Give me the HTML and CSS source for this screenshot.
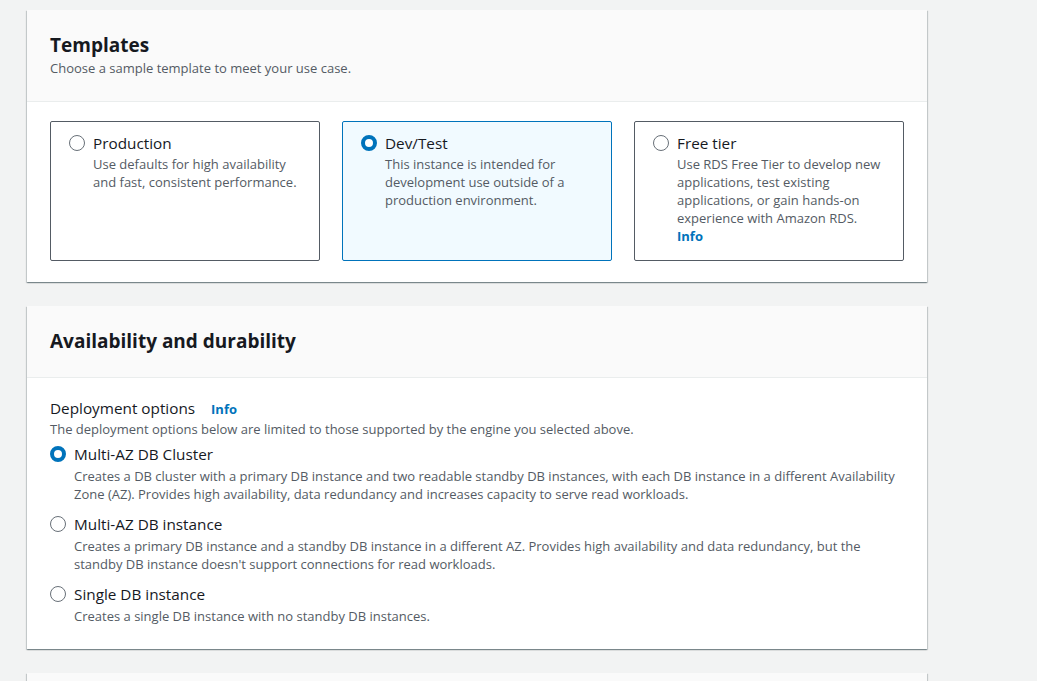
FILE: index.html
```html
<!DOCTYPE html>
<html lang="en">
<head>
<meta charset="utf-8">
<title>Create database</title>
<link rel="stylesheet" href="styles.css">
</head>
<body>
<main class="page">
  <section class="card">
    <header class="card-header">
      <h2 class="card-title">Templates</h2>
      <p class="card-sub">Choose a sample template to meet your use case.</p>
    </header>
    <div class="card-body tiles">
      <label class="tile">
        <span class="radio"></span>
        <span class="tile-text">
          <span class="opt-label">Production</span>
          <span class="opt-desc">Use defaults for high availability and fast, consistent performance.</span>
        </span>
      </label>
      <label class="tile selected">
        <span class="radio checked"></span>
        <span class="tile-text">
          <span class="opt-label">Dev/Test</span>
          <span class="opt-desc">This instance is intended for development use outside of a production environment.</span>
        </span>
      </label>
      <label class="tile">
        <span class="radio"></span>
        <span class="tile-text">
          <span class="opt-label">Free tier</span>
          <span class="opt-desc">Use RDS Free Tier to develop new applications, test existing applications, or gain hands-on experience with Amazon RDS.</span>
          <a class="info" href="#">Info</a>
        </span>
      </label>
    </div>
  </section>

  <section class="card">
    <header class="card-header tall">
      <h2 class="card-title">Availability and durability</h2>
    </header>
    <div class="card-body field">
      <div class="field-label">Deployment options <a class="info" href="#">Info</a></div>
      <p class="field-desc">The deployment options below are limited to those supported by the engine you selected above.</p>
      <div class="radio-group">
        <label class="option">
          <span class="radio checked"></span>
          <span class="tile-text">
            <span class="opt-label">Multi-AZ DB Cluster</span>
            <span class="opt-desc">Creates a DB cluster with a primary DB instance and two readable standby DB instances, with each DB instance in a different Availability Zone (AZ). Provides high availability, data redundancy and increases capacity to serve read workloads.</span>
          </span>
        </label>
        <label class="option">
          <span class="radio"></span>
          <span class="tile-text">
            <span class="opt-label">Multi-AZ DB instance</span>
            <span class="opt-desc">Creates a primary DB instance and a standby DB instance in a different AZ. Provides high availability and data redundancy, but the standby DB instance doesn't support connections for read workloads.</span>
          </span>
        </label>
        <label class="option">
          <span class="radio"></span>
          <span class="tile-text">
            <span class="opt-label">Single DB instance</span>
            <span class="opt-desc">Creates a single DB instance with no standby DB instances.</span>
          </span>
        </label>
      </div>
    </div>
  </section>

  <section class="card">
    <header class="card-header tall"></header>
  </section>
</main>
</body>
</html>
```

FILE: styles.css
```css
html, body {
  margin: 0;
  padding: 0;
  background: #f2f3f3;
  font-family: "Open Sans", "Liberation Sans", Arial, sans-serif;
  color: #16191f;
  height: 681px;
  overflow: hidden;
}

.page {
  display: flex;
  flex-direction: column;
  gap: 24px;
  padding: 10px 0 0 27px;
  width: 900px;
}

.card {
  background: #fff;
  box-shadow: 0 1px 1px 0 rgba(0, 28, 36, 0.3), 1px 1px 1px 0 rgba(0, 28, 36, 0.15), -1px 1px 1px 0 rgba(0, 28, 36, 0.15);
}

.card-header {
  background: #fafafa;
  border-bottom: 1px solid #eaeded;
  padding: 22px 23px 23px;
}

.card-header.tall {
  padding: 22px 23px 21px;
  height: 28px;
}

.card-title {
  margin: 0;
  font-size: 19px;
  line-height: 26px;
  font-weight: 700;
}

.card-sub {
  margin: 0;
  font-size: 13px;
  line-height: 20px;
  color: #545b64;
}

.card-body {
  padding: 19px 23px 21px;
}

.tiles {
  display: flex;
  gap: 22px;
}

.tile {
  flex: 1;
  display: flex;
  gap: 8px;
  height: 118px;
  padding: 10px 18px;
  border: 1px solid #545b64;
  border-radius: 2px;
}

.tile.selected {
  border-color: #0073bb;
  background: #f1faff;
}

.radio {
  flex: none;
  box-sizing: border-box;
  width: 16px;
  height: 16px;
  margin-top: 3px;
  border: 1.5px solid #687078;
  border-radius: 50%;
  background: #fff;
}

.radio.checked {
  border: 4.5px solid #0073bb;
}

.tile-text {
  display: flex;
  flex-direction: column;
}

.opt-label {
  font-size: 15.3px;
  line-height: 22px;
}

.opt-desc {
  margin-top: 1px;
  font-size: 13px;
  line-height: 18px;
  color: #545b64;
}

.option .opt-desc {
  margin-top: 2px;
}

.info {
  color: #0073bb;
  font-weight: 700;
  font-size: 13px;
  line-height: 18px;
  text-decoration: none;
}

.field {
  padding: 19px 23px 24px;
}

.field-label {
  font-size: 15.3px;
  line-height: 22px;
}

.field-label .info {
  margin-left: 12px;
}

.field-desc {
  margin: 0;
  font-size: 13px;
  line-height: 20px;
  color: #545b64;
}

.radio-group {
  display: flex;
  flex-direction: column;
  gap: 10px;
  margin-top: 4px;
}

.option {
  display: flex;
  gap: 8px;
}
```
